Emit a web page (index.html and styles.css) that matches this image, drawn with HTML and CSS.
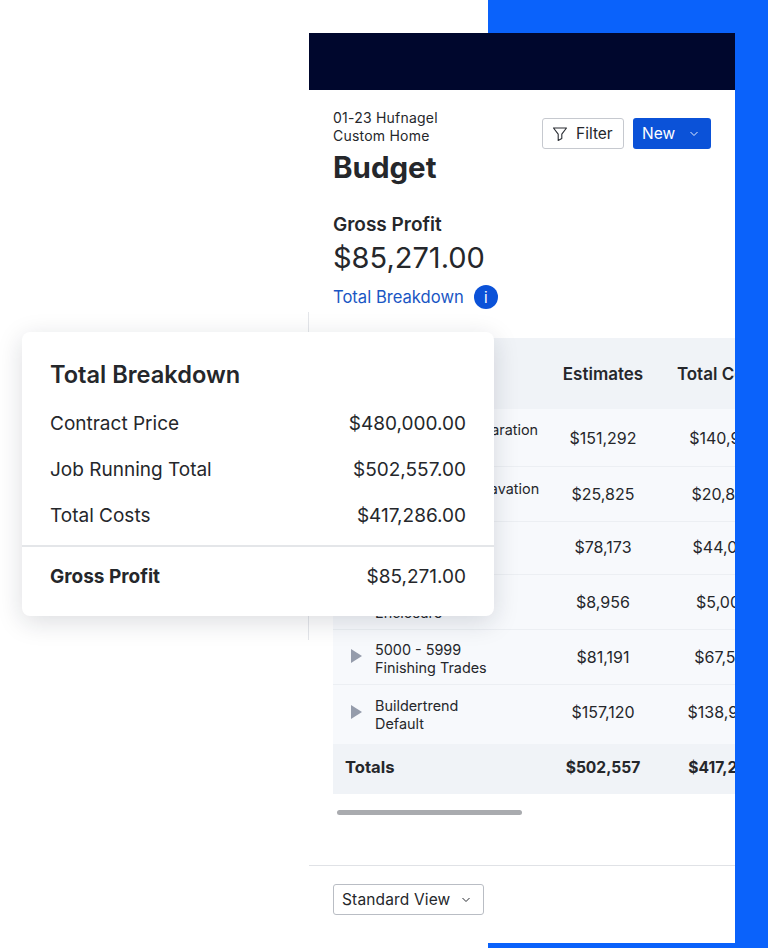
FILE: index.html
```html
<!DOCTYPE html>
<html lang="en">
<head>
<meta charset="utf-8">
<title>Budget</title>
<link rel="stylesheet" href="styles.css">
</head>
<body>
<div class="stage">
  <div class="backdrop"></div>
  <div class="edge"></div>
  <main class="window">
    <div class="navbar"></div>
    <section class="head">
      <div class="head-top">
        <div class="titles">
          <p class="crumb">01-23 Hufnagel<br>Custom Home</p>
          <h1 class="title">Budget</h1>
        </div>
        <div class="actions">
          <button class="btn btn-outline">
            <svg class="filter-icon" viewBox="0 0 16 16" width="16" height="16"><path d="M1.5 2h13L9.8 8.2v4.3l-3.6 2V8.2z" fill="none" stroke="#2a2d33" stroke-width="1.1" stroke-linejoin="round"/></svg>
            Filter
          </button>
          <button class="btn btn-primary">
            New
            <svg class="chev" viewBox="0 0 10 10" width="10" height="10"><path d="M1.5 3 5 6.5 8.5 3" fill="none" stroke="#e6eeff" stroke-width="1"/></svg>
          </button>
        </div>
      </div>
      <h2 class="profit-label">Gross Profit</h2>
      <p class="profit-value">$85,271.00</p>
      <div class="breakdown-link">
        <span class="link-text">Total Breakdown</span>
        <span class="info">i</span>
      </div>
    </section>

    <section class="table">
      <div class="row row-head h71">
        <div class="cell-name"></div>
        <div class="cell-num">Estimates</div>
        <div class="cell-num">Total Costs</div>
      </div>
      <div class="row h58 up up-first">
        <div class="cell-name"><span class="arrow"></span><span class="name">1000 - 1999 Preparation<br>Site</span></div>
        <div class="cell-num">$151,292</div>
        <div class="cell-num">$140,921</div>
      </div>
      <div class="row h55 up">
        <div class="cell-name"><span class="arrow"></span><span class="name">2000 - 2999 Excavation<br>Site</span></div>
        <div class="cell-num">$25,825</div>
        <div class="cell-num">$20,847</div>
      </div>
      <div class="row h53 lift">
        <div class="cell-name"><span class="arrow"></span><span class="name">3000 - 3999<br>Structure</span></div>
        <div class="cell-num">$78,173</div>
        <div class="cell-num">$44,051</div>
      </div>
      <div class="row h55 drop">
        <div class="cell-name"><span class="arrow"></span><span class="name">4000 - 4999<br>Enclosure</span></div>
        <div class="cell-num">$8,956</div>
        <div class="cell-num">$5,006</div>
      </div>
      <div class="row h55 drop">
        <div class="cell-name"><span class="arrow arrow-up"></span><span class="name">5000 - 5999<br>Finishing Trades</span></div>
        <div class="cell-num">$81,191</div>
        <div class="cell-num">$67,512</div>
      </div>
      <div class="row h59 last">
        <div class="cell-name"><span class="arrow arrow-up"></span><span class="name">Buildertrend<br>Default</span></div>
        <div class="cell-num lift-num">$157,120</div>
        <div class="cell-num lift-num">$138,943</div>
      </div>
      <div class="row row-total h50">
        <div class="cell-name cell-total">Totals</div>
        <div class="cell-num">$502,557</div>
        <div class="cell-num">$417,286</div>
      </div>
    </section>

    <div class="scrollbar"></div>

    <footer class="foot">
      <button class="btn btn-view">
        Standard View
        <svg class="chev" viewBox="0 0 10 10" width="10" height="10"><path d="M1.5 3 5 6.5 8.5 3" fill="none" stroke="#2a2d33" stroke-width="1"/></svg>
      </button>
    </footer>
  </main>

  <aside class="popover">
    <h3 class="pop-title">Total Breakdown</h3>
    <dl class="pop-list">
      <div class="pop-row"><dt>Contract Price</dt><dd>$480,000.00</dd></div>
      <div class="pop-row"><dt>Job Running Total</dt><dd>$502,557.00</dd></div>
      <div class="pop-row"><dt>Total Costs</dt><dd>$417,286.00</dd></div>
    </dl>
    <div class="pop-row pop-total"><span class="pop-total-label">Gross Profit</span><span>$85,271.00</span></div>
  </aside>
</div>
</body>
</html>
```
FILE: styles.css
```css
* { box-sizing: border-box; }
html, body { margin: 0; padding: 0; background: #fff; }
body { font-family: Inter, "Liberation Sans", sans-serif; color: #25272b; }
.stage { position: relative; width: 768px; height: 948px; overflow: hidden; padding: 33px 33px 5px 309px; }
.backdrop { position: absolute; left: 488px; top: 0; right: 0; bottom: 0; background: #0a62fb; }
.edge { position: absolute; left: 308px; top: 312px; width: 1px; height: 328px; background: #e4e6ea; }
.window { position: relative; height: 910px; background: #fff; overflow: hidden; }
.navbar { height: 57px; background: #00072d; }
.head { padding: 19px 24px 0; }
.head-top { display: flex; justify-content: space-between; align-items: flex-start; }
.crumb { margin: 0; font-size: 14px; line-height: 18px; letter-spacing: .22px; }
.title { margin: 5px 0 0; font-size: 29.5px; line-height: 34px; font-weight: 700; }
.actions { display: flex; gap: 9px; margin-top: 9px; }
.btn { display: inline-flex; align-items: center; height: 31px; border-radius: 3px; font: 400 15.5px/1 Inter, "Liberation Sans", sans-serif; padding: 0; }
.btn-outline { width: 82px; background: #fff; border: 1px solid #c6c9cf; color: #25272b; padding-left: 9px; gap: 8px; }
.btn-primary { width: 78px; background: #0b52d8; border: 0; color: #fff; padding-left: 9px; gap: 14px; }
.filter-icon { flex: none; }
.chev { flex: none; }
.profit-label { margin: 28px 0 0; font-size: 19px; line-height: 26px; font-weight: 600; }
.profit-value { margin: 2px 0 0; font-size: 29px; line-height: 36px; font-weight: 400; }
.breakdown-link { display: flex; align-items: center; gap: 10px; margin-top: 8px; height: 26px; }
.link-text { font-size: 16.6px; color: #1a56c4; }
.info { width: 24px; height: 24px; border-radius: 50%; background: #0b52d8; color: #fff; display: flex; align-items: center; justify-content: center; font-size: 15px; }
.table { margin: 28px 0 0 24px; width: 402px; overflow: hidden; background: #f7f9fc; }
.row { display: grid; grid-template-columns: 207px 126px 114px; align-items: center; font-size: 16px; border-bottom: 1px solid #eceff3; width: 447px; }
.h71 { height: 71px; } .h58 { height: 58px; } .h55 { height: 55px; } .h53 { height: 53px; }
.h59 { height: 59px; } .h50 { height: 50px; }
.last { border-bottom: 0; }
.row-head { background: #f0f3f7; font-weight: 600; font-size: 17px; border-bottom: 0; }
.row-total { background: #f0f3f7; font-weight: 700; font-size: 15.6px; border-bottom: 0; padding-bottom: 4px; }
.cell-name { display: flex; align-items: center; padding-left: 18px; font-size: 14.4px; }
.cell-total { padding-left: 12px; font-size: 16.6px; }
.cell-num { text-align: center; white-space: nowrap; }
.lift { padding-bottom: 3px; }
.lift-num { padding-bottom: 6px; }
.up .cell-name { align-self: start; padding-top: 13px; }
.up-first .cell-name { padding-top: 12px; }
.drop .cell-name { padding-top: 4px; }
.arrow { flex: none; width: 0; height: 0; border-left: 11px solid #959cab; border-top: 7px solid transparent; border-bottom: 7px solid transparent; margin-right: 13px; }
.arrow-up { margin-top: -6px; }
.name { line-height: 18px; white-space: nowrap; }
.scrollbar { width: 185px; height: 5px; margin: 16px 0 0 28px; border-radius: 3px; background: #a9abaf; }
.foot { margin-top: 50px; border-top: 1px solid #e0e2e6; padding: 18px 24px 0; }
.btn-view { width: 151px; background: #fff; border: 1px solid #b9bdc4; color: #25272b; padding-left: 8px; gap: 11px; letter-spacing: .15px; }
.popover { position: absolute; left: 22px; top: 332px; width: 472px; height: 284px; background: #fff; border-radius: 8px; box-shadow: 0 6px 26px rgba(20, 30, 50, .15); padding: 28px 28px 0; }
.pop-title { margin: 0; font-size: 23.6px; line-height: 30px; font-weight: 600; }
.pop-list { margin: 10px 0 0; height: 136px; }
.pop-row { display: flex; justify-content: space-between; align-items: center; height: 46px; font-size: 19px; }
.pop-row dt, .pop-row dd { margin: 0; }
.pop-total { margin: 9px -28px 0; padding: 0 28px; height: 61px; border-top: 2px solid #e4e6e9; }
.pop-total-label { font-weight: 700; }
```
